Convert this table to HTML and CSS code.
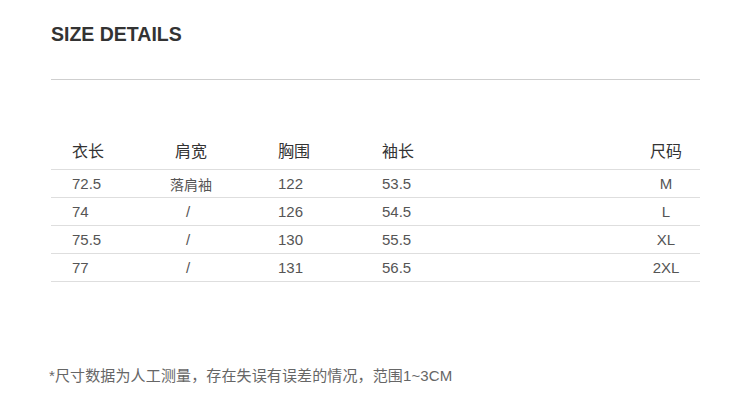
FILE: index.html
```html
<!DOCTYPE html>
<html lang="zh">
<head>
<meta charset="utf-8">
<title>Size Details</title>
<link rel="stylesheet" href="styles.css">
</head>
<body>
<div class="page">
  <h1 class="title">SIZE DETAILS</h1>
  <div class="rule"></div>
  <div class="table">
    <div class="row head">
      <div class="c1">衣长</div>
      <div class="c2">肩宽</div>
      <div class="c3">胸围</div>
      <div class="c4">袖长</div>
      <div class="c5">尺码</div>
    </div>
    <div class="row">
      <div class="c1">72.5</div>
      <div class="c2 cjk">落肩袖</div>
      <div class="c3">122</div>
      <div class="c4">53.5</div>
      <div class="c5">M</div>
    </div>
    <div class="row">
      <div class="c1">74</div>
      <div class="c2 slash">/</div>
      <div class="c3">126</div>
      <div class="c4">54.5</div>
      <div class="c5">L</div>
    </div>
    <div class="row">
      <div class="c1">75.5</div>
      <div class="c2 slash">/</div>
      <div class="c3">130</div>
      <div class="c4">55.5</div>
      <div class="c5">XL</div>
    </div>
    <div class="row">
      <div class="c1">77</div>
      <div class="c2 slash">/</div>
      <div class="c3">131</div>
      <div class="c4">56.5</div>
      <div class="c5">2XL</div>
    </div>
  </div>
  <p class="note">*尺寸数据为人工测量，存在失误有误差的情况，范围1~3CM</p>
</div>
</body>
</html>
```
FILE: styles.css
```css
* { box-sizing: border-box; }
html, body { margin: 0; padding: 0; background: #fff; }
body {
  font-family: "Liberation Sans", "Noto Sans CJK SC", sans-serif;
  color: #333;
}
.page {
  width: 649px;
  margin-left: 51px;
  padding-top: 22px;
}
.title {
  margin: 0;
  font-size: 19.5px;
  line-height: 24px;
  font-weight: bold;
  color: #333;
}
.rule {
  margin-top: 33px;
  border-top: 1px solid #cfcfcf;
}
.table {
  margin-top: 50px;
}
.row {
  display: grid;
  grid-template-columns: 32px 174px 104px 1fr 68px;
  padding-left: 21px;
  height: 28px;
  align-items: center;
  border-bottom: 1px solid #dedede;
  font-size: 15px;
  color: #555;
  white-space: nowrap;
}
.row.head {
  height: 40px;
  font-size: 16px;
  color: #333;
}
.c2, .c5 { text-align: center; }
.slash { padding-right: 6px; }
.cjk { font-size: 14px; }
.note {
  margin: 84px 0 0 -2px;
  font-size: 15px;
  line-height: 20px;
  letter-spacing: 0.13px;
  color: #666;
}
```
